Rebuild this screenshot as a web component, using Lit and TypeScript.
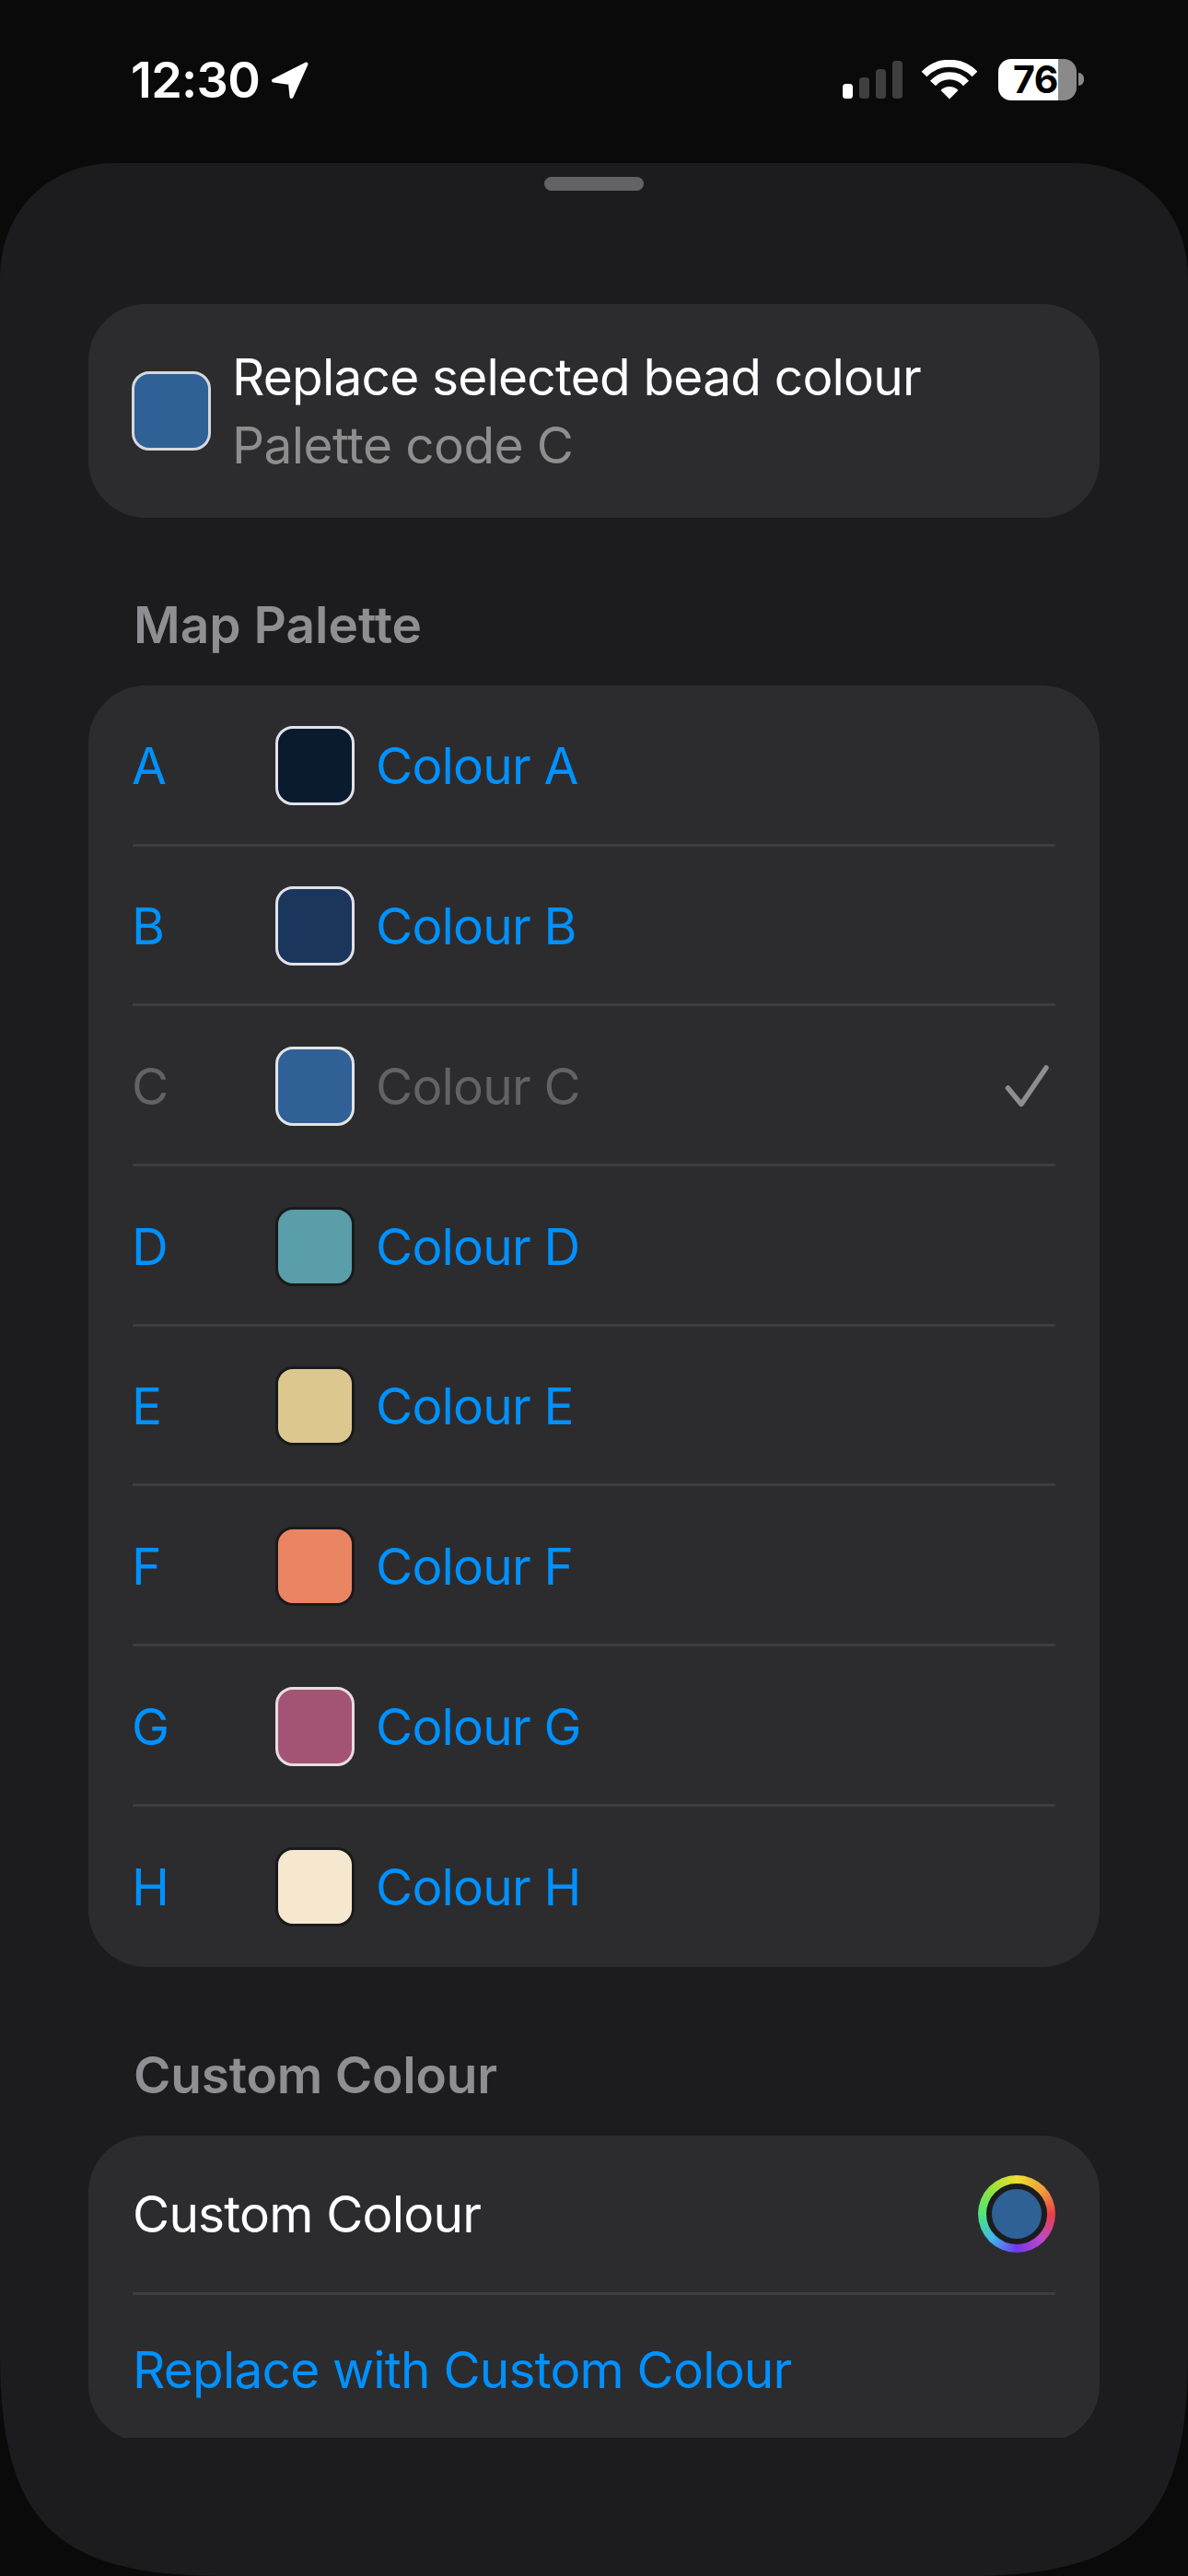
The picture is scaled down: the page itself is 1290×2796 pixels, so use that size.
import { LitElement, html, css } from "lit";
import { customElement } from "lit/decorators.js";

const swatches = [
  { k: "A", c: "#0a1a2f", b: "#dfe3e8" },
  { k: "B", c: "#1b365d", b: "#dfe3e8" },
  { k: "C", c: "#2f6196", b: "#e2e4e8", off: true },
  { k: "D", c: "#5a9ea9", b: "#1a1a1c" },
  { k: "E", c: "#dcc88f", b: "#1a1a1c" },
  { k: "F", c: "#ea8563", b: "#1a1a1c" },
  { k: "G", c: "#a35475", b: "#e8dde2" },
  { k: "H", c: "#f5e8cf", b: "#1a1a1c" },
];

@customElement("app-root")
export class AppRoot extends LitElement {
  static styles = css`
    :host {
      display: block;
      width: 1290px;
      height: 2796px;
      background: #0a0a0a;
      overflow: hidden;
      font-family: Inter, "Liberation Sans", sans-serif;
      color: #fff;
    }
    .status {
      height: 177px;
      display: flex;
      align-items: flex-start;
      padding: 64px 113px 0 142px;
      box-sizing: border-box;
    }
    .time {
      font-size: 54px;
      font-weight: 600;
      line-height: 48px;
      letter-spacing: -0.7px;
      margin-top: -1px;
    }
    .loc { margin-left: 12px; margin-top: 2px; display: block; }
    .right { margin-left: auto; display: flex; align-items: flex-start; gap: 23px; }
    .icons { display: block; margin-top: 1px; }
    .battery {
      position: relative;
      display: flex;
      width: 85px;
      height: 45px;
      margin-right: 8px;
    }
    .battery .body {
      width: 85px;
      height: 45px;
      border-radius: 14px;
      background: linear-gradient(90deg, #fff 0 65px, #8a8a8a 65px);
      color: #000;
      font-size: 41px;
      font-weight: 700;
      line-height: 45px;
      letter-spacing: -0.5px;
      box-sizing: border-box;
      padding-left: 16px;
    }
    .battery .nub {
      position: absolute;
      left: 87px;
      top: 15px;
      width: 6px;
      height: 14px;
      border-radius: 0 7px 7px 0;
      background: #8a8a8a;
    }
    .sheet {
      height: 2619px;
      background: #1c1c1e;
      box-sizing: border-box;
      padding: 15px 96px 0;
      display: flex;
      flex-direction: column;
      clip-path: path("M0 125C0 52 52 0 125 0L1165 0C1238 0 1290 52 1290 125L1290 2379C1290 2559 1230 2619 1050 2619L240 2619C60 2619 0 2559 0 2379Z");
    }
    .handle {
      align-self: center;
      width: 108px;
      height: 15px;
      border-radius: 8px;
      background: #636366;
      flex: none;
    }
    .card {
      background: #2c2c2e;
      border-radius: 62px;
      flex: none;
    }
    .head {
      margin-top: 123px;
      height: 232px;
      display: flex;
      align-items: center;
      padding-left: 47px;
      box-sizing: border-box;
    }
    .sw {
      width: 86px;
      height: 86px;
      box-sizing: border-box;
      border: 3.5px solid;
      border-radius: 19px;
      flex: none;
    }
    .head-text { margin-left: 23px; display: flex; flex-direction: column; margin-top: -1px; }
    .t {
      font-size: 55px;
      line-height: 74px;
      letter-spacing: -0.8px;
      white-space: nowrap;
    }
    .grey { color: #8e8e8e; letter-spacing: -0.6px; }
    .title {
      font-size: 55px;
      font-weight: 600;
      line-height: 66px;
      color: #8e8e93;
      padding-left: 49px;
      flex: none;
    }
    .title.one { margin-top: 83px; margin-bottom: 33px; letter-spacing: 0; }
    .title.two { margin-top: 84px; margin-bottom: 33px; letter-spacing: -0.2px; }
    .row {
      margin: 0 48px;
      height: 173.67px;
      box-sizing: border-box;
      border-top: 3px solid #3d3d3f;
      padding-top: 3px;
      display: flex;
      align-items: center;
      color: #0091ff;
    }
    .row:first-child { border-top: 0; height: 171.67px; padding-top: 2px; }
    .row:last-child { height: 177px; padding-bottom: 3px; }
    .row.off { color: #636366; }
    .letter { width: 156px; flex: none; margin-left: -1px; }
    .name { margin-left: 23px; flex: 1; }
    .check { display: block; margin-right: 7px; }
    .clip { flex: none; height: 328px; overflow: hidden; }
    .custom { height: 333px; }
    .custom .row:first-child { height: 170px; padding-top: 0; color: #fff; justify-content: space-between; }
    .custom .row:last-child { height: 163px; border-top: 3px solid #3d3d3f; padding: 2px 0 0; }
    .well {
      width: 84px;
      height: 84px;
      border-radius: 50%;
      background: conic-gradient(#efe02f, #ef9a3c 50deg, #e83e48 90deg, #bf48c8 135deg, #7038ee 180deg, #3fb8ee 225deg, #50e47a 270deg, #94e23c 315deg, #efe02f);
      display: flex;
      align-items: center;
      justify-content: center;
    }
    .well i {
      display: block;
      width: 54px;
      height: 54px;
      border-radius: 50%;
      background: #2f6196;
      border: 6px solid #1c1c1e;
    }
  `;

  render() {
    return html`
      <div class="status">
        <span class="time">12:30</span>
        <svg class="loc" width="42" height="42" viewBox="0 0 42 42">
          <path d="M38.5 3.5 L3 21.5 L21 24 L22.5 39 Z" fill="#fff" stroke="#fff" stroke-width="4" stroke-linejoin="round"></path>
        </svg>
        <div class="right">
          <svg class="icons" width="146" height="44" viewBox="0 0 146 44">
            <rect x="0" y="26" width="11" height="16" rx="3.5" fill="#fff"></rect>
            <rect x="18" y="19" width="11" height="23" rx="3.5" fill="#3f3f3f"></rect>
            <rect x="36" y="10" width="11" height="32" rx="3.5" fill="#3f3f3f"></rect>
            <rect x="54" y="1" width="11" height="41" rx="3.5" fill="#3f3f3f"></rect>
            <path d="M88.5 15.5 A38 38 0 0 1 143.5 15.5" fill="none" stroke="#fff" stroke-width="8"></path>
            <path d="M98 25.5 A24 24 0 0 1 134 25.5" fill="none" stroke="#fff" stroke-width="8"></path>
            <path d="M116 42.5 L106.5 33 A13.5 13.5 0 0 1 125.5 33 Z" fill="#fff"></path>
          </svg>
          <div class="battery">
            <div class="body">76</div>
            <div class="nub"></div>
          </div>
        </div>
      </div>
      <div class="sheet">
        <div class="handle"></div>
        <div class="card head">
          <div class="sw" style="background:#2f6196;border-color:#d5d8dd"></div>
          <div class="head-text">
            <span class="t">Replace selected bead colour</span>
            <span class="t grey">Palette code C</span>
          </div>
        </div>
        <div class="title one">Map Palette</div>
        <div class="card">
          ${swatches.map(
            (s) => html`
              <div class="row ${s.off ? "off" : ""}">
                <span class="t letter">${s.k}</span>
                <div class="sw" style="background:${s.c};border-color:${s.b}"></div>
                <span class="t name">Colour ${s.k}</span>
                ${s.off
                  ? html`<svg class="check" width="48" height="48" viewBox="0 0 48 48">
                      <path d="M3.5 26 L18 43.5 L45 4" fill="none" stroke="#8e8e8e" stroke-width="5.5" stroke-linecap="round" stroke-linejoin="round"></path>
                    </svg>`
                  : ""}
              </div>
            `
          )}
        </div>
        <div class="title two">Custom Colour</div>
        <div class="clip">
          <div class="card custom">
            <div class="row">
              <span class="t">Custom Colour</span>
              <div class="well"><i></i></div>
            </div>
            <div class="row"><span class="t">Replace with Custom Colour</span></div>
          </div>
        </div>
      </div>
    `;
  }
}
